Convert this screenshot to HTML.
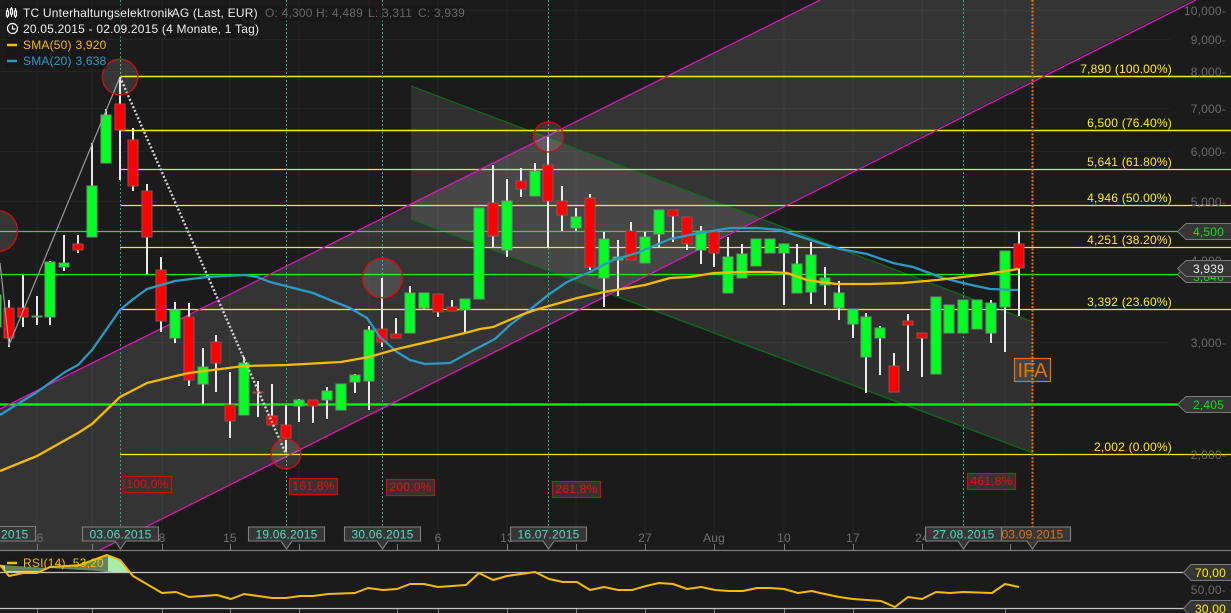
<!DOCTYPE html>
<html><head><meta charset="utf-8"><title>Chart</title>
<style>
html,body{margin:0;padding:0;background:#1b1b1b;width:1231px;height:613px;overflow:hidden}
svg{display:block;position:absolute;left:0;top:0}
text{font-family:"Liberation Sans",sans-serif;font-size:12px;letter-spacing:.2px;white-space:pre}
.ax{fill:#6a6a6a;text-anchor:end}
.fib{fill:#ffee00;text-anchor:end}
.dt{fill:#45e0c0;text-anchor:middle}
.tk{fill:#6f6f6f;text-anchor:middle}
.pc{fill:#ee0c0c;text-anchor:middle}
</style></head><body>
<svg width="1231" height="613" viewBox="0 0 1231 613" xmlns="http://www.w3.org/2000/svg">
<rect width="1231" height="613" fill="#1b1b1b"/>
<!-- grid -->
<path d="M37 0V545M92 0V545M162 0V545M230 0V545M299 0V545M369 0V545M438 0V545M507 0V545M576 0V545M645 0V545M714 0V545M784 0V545M853 0V545M922 0V545M1005 0V545" stroke="#262626" stroke-width="1" fill="none"/>
<path d="M0 10.5H1170M0 39.5H1170M0 71.5H1170M0 108.5H1170M0 151.5H1170M0 201.5H1170M0 342.5H1170" stroke="#242424" stroke-width="1" fill="none"/>
<!-- channels -->
<polygon points="0,409 820,0 1193,0 100,550 0,550" fill="#fff" fill-opacity=".115"/>
<polygon points="411,86 1033,322 1033,453 411,219" fill="#fff" fill-opacity=".095"/>
<path d="M411 86L1033 322M411 219L1033 453" stroke="#0c6e14" stroke-width="1.2" fill="none"/>
<!-- horizontal levels -->
<path d="M120 76.5H1231M120 130.5H1231" stroke="#ffee00" stroke-width="1.6" fill="none"/>
<path d="M120 169.5H1231M120 205.5H1231M120 247.5H1231M120 309.5H1231M120 454.5H1231" stroke="#ffee00" stroke-width="1.3" fill="none"/>
<path d="M0 231.5H1180" stroke="#33d633" stroke-width="1.2" fill="none"/>
<path d="M0 274.5H1180" stroke="#10f010" stroke-width="1.3" fill="none"/>
<path d="M0 404.5H1180" stroke="#10f510" stroke-width="2.2" fill="none"/>
<!-- channel lines -->
<path d="M0 409L820 0M100 550L1196 0" stroke="#dc16b8" stroke-width="1.3" fill="none"/>
<!-- verticals -->
<path d="M120.5 0V527M286.5 0V527M382.5 0V527M548.5 0V527M963.5 0V527" stroke="#2ea78d" stroke-width="1" stroke-dasharray="2 2" fill="none"/>
<path d="M1032.5 0V527" stroke="#e8700c" stroke-width="2" stroke-dasharray="2 1.6" fill="none"/>
<!-- wicks -->
<path stroke="#fff" stroke-width="1.8" fill="none" d="M9 300V347M23 275V327M37 296V325M50 261V325M64 235V271M78 235V253M92 143V237M106 109V163M120 77V180M133 128V191M147 184V274M161 257V332M175 302V343M189 303V386M203 348V404M216 335V392M230 372V438M244 357V415M258 381V417M272 384V425M286 405V452M299 399V422M313 400V423M327 387V419M341 384V410M355 374V393M369 326V410M382 278V347M396 318V338M410 286V333M424 293V309M438 294V317M452 300V311M465 299V333M479 208V299M493 165V247M507 179V257M521 168V197M535 163V196M548 137V247M562 186V231M576 208V231M590 194V270M604 232V307M618 240V296M631 222V260M645 232V263M659 210V247M673 210V242M687 217V250M701 226V264M714 232V267M728 237V293M742 244V278M756 239V266M770 239V253M784 244V305M797 244V293M811 242V304M825 267V305M839 281V320M853 309V338M866 313V393M880 326V375M894 353V392M908 314V371M922 333V377M936 297V374M949 305V333M963 300V333M977 300V329M991 300V343M1005 251V352M1019 232V316"/>
<!-- green bodies -->
<path fill="#00ff22" stroke="#5f9c66" stroke-width="1.1" d="M-9 295h10v32h-10zM32 316h10v1h-10zM45 262h10v55h-10zM59 263h10v4h-10zM87 186h10v51h-10zM101 115h10v48h-10zM170 310h10v28h-10zM198 367h10v17h-10zM239 363h10v52h-10zM294 400h10v6h-10zM322 391h10v9h-10zM336 384h10v26h-10zM350 375h10v7h-10zM364 330h10v51h-10zM405 293h10v40h-10zM419 293h10v15h-10zM460 299h10v11h-10zM474 208h10v91h-10zM502 201h10v49h-10zM530 171h10v25h-10zM571 217h10v11h-10zM599 239h10v39h-10zM613 257h10v3h-10zM640 237h10v26h-10zM654 210h10v24h-10zM696 231h10v19h-10zM723 257h10v36h-10zM737 254h10v24h-10zM751 239h10v27h-10zM765 239h10v14h-10zM779 244h10v9h-10zM792 264h10v29h-10zM806 255h10v37h-10zM820 278h10v7h-10zM834 293h10v15h-10zM848 309h10v15h-10zM861 317h10v40h-10zM875 328h10v10h-10zM931 297h10v77h-10zM944 305h10v28h-10zM958 300h10v33h-10zM972 300h10v29h-10zM986 303h10v30h-10zM1000 251h10v56h-10z"/>
<!-- red bodies -->
<path fill="#ff0000" stroke="#9a4b4b" stroke-width="1.1" d="M4 308h10v30h-10zM18 308h10v9h-10zM73 244h10v6h-10zM115 104h10v26h-10zM128 140h10v46h-10zM142 191h10v46h-10zM156 270h10v51h-10zM184 317h10v63h-10zM211 342h10v21h-10zM225 405h10v16h-10zM253 392h10v1h-10zM267 416h10v9h-10zM281 425h10v13h-10zM308 400h10v6h-10zM377 329h10v13h-10zM391 334h10v4h-10zM433 294h10v18h-10zM447 307h10v4h-10zM488 203h10v33h-10zM516 181h10v8h-10zM543 165h10v36h-10zM557 201h10v14h-10zM585 198h10v69h-10zM626 231h10v29h-10zM668 210h10v6h-10zM682 217h10v27h-10zM709 232h10v21h-10zM889 366h10v26h-10zM903 321h10v4h-10zM917 333h10v5h-10zM1014 244h10v24h-10z"/>
<!-- zigzag -->
<path d="M0 263L3 290L9 345L120 77" stroke="#9a9a9a" stroke-width="1.2" fill="none"/>
<path d="M120 77L286 454" stroke="#d2d2d2" stroke-width="2.4" stroke-dasharray="2 2" fill="none"/>
<!-- SMAs -->
<polyline fill="none" stroke="#2a9ac4" stroke-width="2.3" stroke-linejoin="round" points="0,415 37,392 65,372 78,365 92,350 120,310 132,300 147,289 175,281 207,277 245,275 257,277 270,282 313,293 330,300 350,308 367,318 380,337 397,352 410,360 425,364 450,363 470,352 495,339 510,325 527,312 548,295 567,282 590,272 613,260 637,253 670,239 700,233 730,228 757,228 780,230 820,243 840,249 867,254 893,263 913,267 943,278 967,284 990,289 1018,290"/>
<polyline fill="none" stroke="#f5bb00" stroke-width="2.3" stroke-linejoin="round" points="0,471 37,456 78,433 92,424 120,397 147,383 176,376 189,373 244,366 286,365 341,362 369,357 397,349 440,339 465,333 480,329 493,327 521,315 535,310 577,298 604,292 645,285 670,278 690,277 714,273 743,272 770,272 787,273 807,280 820,282 837,284 870,284 903,283 937,280 963,277 987,274 1018,269"/>
<!-- circles -->
<g fill="#fff" fill-opacity=".12" stroke="#d20d0d" stroke-width="1.3">
<circle cx="120" cy="77" r="17.8"/><circle cx="-3" cy="231" r="20.5"/><circle cx="382.5" cy="278" r="19.8"/><circle cx="286" cy="454" r="14.8"/><circle cx="548.5" cy="137" r="15"/>
</g>
<!-- fib labels -->
<text class="fib" x="1172" y="73">7,890 (100.00%)</text>
<text class="fib" x="1172" y="127">6,500 (76.40%)</text>
<text class="fib" x="1172" y="166">5,641 (61.80%)</text>
<text class="fib" x="1172" y="202">4,946 (50.00%)</text>
<text class="fib" x="1172" y="244">4,251 (38.20%)</text>
<text class="fib" x="1172" y="306">3,392 (23.60%)</text>
<text class="fib" x="1172" y="451">2,002 (0.00%)</text>
<!-- axis labels -->
<text class="ax" x="1226" y="15">10,000-</text>
<text class="ax" x="1226" y="44">9,000-</text>
<text class="ax" x="1226" y="76">8,000-</text>
<text class="ax" x="1226" y="113">7,000-</text>
<text class="ax" x="1226" y="156">6,000-</text>
<text class="ax" x="1226" y="206">5,000-</text>
<text class="ax" x="1226" y="265">4,000-</text>
<text class="ax" x="1226" y="347">3,000-</text>
<text class="ax" x="1226" y="459">2,000-</text>
<!-- price tags -->
<g stroke="#7a7a7a" stroke-width="1" fill="#363636">
<polygon points="1177.5,231.5 1186,223.5 1232,223.5 1232,239.5 1186,239.5"/>
<polygon points="1177.5,274.5 1186,266.5 1232,266.5 1232,282.5 1186,282.5"/>
</g>
<text x="1193" y="281" fill="#12e012">3,846</text>
<polygon points="1177.5,268.5 1186,260.5 1232,260.5 1232,276.5 1186,276.5" stroke="#7a7a7a" stroke-width="1" fill="#363636"/>
<polygon points="1177.5,404.5 1186,396.5 1232,396.5 1232,412.5 1186,412.5" stroke="#7a7a7a" stroke-width="1" fill="#363636"/>
<text x="1193" y="236" fill="#12e012">4,500</text>
<text x="1193" y="273" fill="#ededed">3,939</text>
<text x="1193" y="409" fill="#12e012">2,405</text>
<!-- IFA -->
<rect x="1014.5" y="358.5" width="36" height="23" fill="#fff" fill-opacity=".1" stroke="#e8700c" stroke-width="1.2"/>
<text x="1032.5" y="377" text-anchor="middle" fill="#e8700c" style="font-size:20px;letter-spacing:0">IFA</text>
<!-- percent boxes -->
<g fill="#383232" stroke="#cc0c0c" stroke-width="1.2">
<rect x="123.5" y="476.5" width="48" height="16"/><rect x="289.5" y="478.5" width="48" height="16"/><rect x="386.5" y="479.5" width="48" height="16"/><rect x="552.5" y="481.5" width="48" height="16"/><rect x="967.5" y="473.5" width="48" height="16"/>
</g>
<text class="pc" x="147.5" y="488">100,0%</text>
<text class="pc" x="313.5" y="490">161,8%</text>
<text class="pc" x="410.5" y="491">200,0%</text>
<text class="pc" x="576.5" y="493">261,8%</text>
<text class="pc" x="991.5" y="485">461,8%</text>
<!-- bottom axis -->
<rect x="0" y="550" width="1231" height="63" fill="#1b1b1b"/>
<path d="M0 550.5H1231" stroke="#7c7c7c" stroke-width="1.2"/>
<path d="M37.5 544V550M92.5 544V550M162.5 544V550M230.5 544V550M299.5 544V550M397.5 544V550M438.5 544V550M507.5 544V550M576.5 544V550M645.5 544V550M714.5 544V550M784.5 544V550M853.5 544V550M922.5 544V550M1010.5 544V550" stroke="#7c7c7c" stroke-width="1"/>
<text class="tk" x="40" y="542">6</text>
<text class="tk" x="162" y="542">8</text>
<text class="tk" x="230" y="542">15</text>
<text class="tk" x="438" y="542">6</text>
<text class="tk" x="507" y="542">13</text>
<text class="tk" x="645" y="542">27</text>
<text class="tk" x="714" y="542">Aug</text>
<text class="tk" x="784" y="542">10</text>
<text class="tk" x="853" y="542">17</text>
<text class="tk" x="922" y="542">24</text>
<!-- date tags -->
<g fill="#363636" stroke="#808080" stroke-width="1.1" stroke-linejoin="miter">
<path d="M-2 526.5H35.5V541H-2z"/>
<path d="M82.5 527H158.5V541H126L120.5 549L115 541H82.5z"/>
<path d="M248.5 527H324.5V541H292L286.5 549L281 541H248.5z"/>
<path d="M344.5 527H420.5V541H388L382.5 549L377 541H344.5z"/>
<path d="M510.5 527H586.5V541H554L548.5 549L543 541H510.5z"/>
<path d="M925.5 527H1001.5V541H969L963.5 549L958 541H925.5z"/>
<path d="M1001.5 527H1070.5V541H1038L1032.5 549L1027 541H1001.5z"/>
</g>
<text x="1" y="538.5" fill="#45e0c0">2015</text>
<text class="dt" x="120.5" y="538.5">03.06.2015</text>
<text class="dt" x="286.5" y="538.5">19.06.2015</text>
<text class="dt" x="382.5" y="538.5">30.06.2015</text>
<text class="dt" x="548.5" y="538.5">16.07.2015</text>
<text class="dt" x="963.5" y="538.5">27.08.2015</text>
<text x="1001.5" y="538.5" fill="#e8700c">03.09.2015</text>
<!-- RSI pane -->
<polygon points="0,565 5,573 37,573 50,567 67,566 80,565 107,555 120,560 130,573" fill="#a8eca8"/>
<path d="M0 572.5H1185M0 608.5H1185" stroke="#c4c4c4" stroke-width="1.2"/>
<path d="M37.5 609V613M92.5 609V613M162.5 609V613M230.5 609V613M299.5 609V613M397.5 609V613M438.5 609V613M507.5 609V613M576.5 609V613M645.5 609V613M714.5 609V613M784.5 609V613M853.5 609V613M1005.5 609V613" stroke="#8a8a8a" stroke-width="1"/>
<rect x="5" y="555" width="103" height="16" fill="#1a1a1a" fill-opacity=".5"/>
<polyline fill="none" stroke="#f5bb00" stroke-width="2" stroke-linejoin="round" points="0,565 9,576 23,573 37,573 50,567 67,566 80,565 107,555 120,560 133,576 162,593 176,592 189,597 217,595 231,599 244,594 258,596 272,598 286,598 300,596 313,596 328,594 355,593 368,588 383,590 397,589 410,584 424,584 438,587 452,586 466,585 479,573 493,580 507,576 521,574 535,572 549,579 563,582 577,582 590,590 604,587 618,590 632,590 646,586 659,583 673,584 687,589 701,587 715,590 729,591 743,591 757,588 770,588 784,589 798,593 812,591 820,593 839,597 853,599 881,601 895,607 908,597 922,599 936,592 950,593 963,592 992,593 1005,584 1019,587"/>
<path d="M7 563H17" stroke="#f5bb00" stroke-width="2.5"/>
<text x="23" y="567" fill="#f5bb00">RSI(14)  53,20</text>
<g stroke="#7a7a7a" stroke-width="1" fill="#363636">
<polygon points="1183.5,572.5 1191,564.5 1232,564.5 1232,580.5 1191,580.5"/>
<polygon points="1183.5,608.5 1191,600.5 1232,600.5 1232,618 1191,618"/>
</g>
<text x="1195" y="577" fill="#ffee00">70,00</text>
<text x="1195" y="613" fill="#ffee00">30,00</text>
<text class="ax" x="1226" y="594">50,00-</text>
<!-- header -->
<rect x="5" y="5" width="460" height="16" fill="#161616" fill-opacity=".55"/>
<rect x="5" y="21" width="255" height="16" fill="#161616" fill-opacity=".55"/>
<rect x="5" y="37" width="102" height="32" fill="#161616" fill-opacity=".55"/>
<g stroke="#fff" fill="none" stroke-width="1.2">
<path d="M7.5 8V18M11.5 7V17M15.5 8V18"/>
<rect x="6.5" y="11" width="2" height="5" fill="#1b1b1b"/><rect x="10.5" y="9" width="2" height="5" fill="#1b1b1b"/><rect x="14.5" y="11" width="2" height="5" fill="#1b1b1b"/>
<circle cx="12.5" cy="28.5" r="5"/><path d="M12.5 25.5V29H15.5"/>
</g>
<path d="M7 45H17" stroke="#f5bb00" stroke-width="2.5"/>
<path d="M7 61H17" stroke="#2a9ac4" stroke-width="2.5"/>
<text x="23" y="17" fill="#eeeeee">TC Unterhaltungselektronik<tspan dx="-2">AG (Last, EUR)</tspan></text>
<text x="265" y="17" fill="#666">O: 4,300</text>
<text x="316" y="17" fill="#666">H: 4,489</text>
<text x="368" y="17" fill="#666">L: 3,311</text>
<text x="418" y="17" fill="#666">C: 3,939</text>
<text x="23" y="33" fill="#eeeeee">20.05.2015 - 02.09.2015 (4 Monate, 1 Tag)</text>
<text x="23" y="49" fill="#f5bb00">SMA(50)</text><text x="75.5" y="49" fill="#f5bb00">3,920</text>
<text x="23" y="65" fill="#2a9ac4">SMA(20)</text><text x="75.5" y="65" fill="#2a9ac4">3,638</text>
</svg>
</body></html>
